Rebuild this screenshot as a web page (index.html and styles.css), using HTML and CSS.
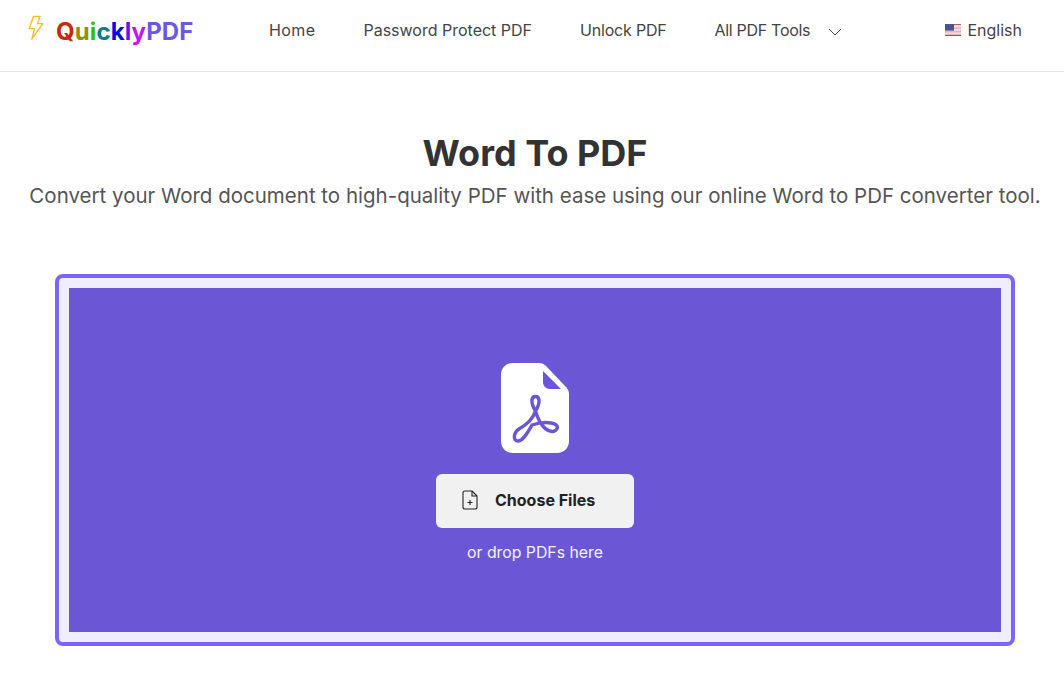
FILE: index.html
```html
<!DOCTYPE html>
<html lang="en">
<head>
    <meta charset="UTF-8">
    <meta name="viewport" content="width=device-width, initial-scale=1.0">
    <title>Word To PDF</title>
    <link rel="stylesheet" href="styles.css">
</head>
<body>
<header class="navbar">
    <a class="logo" href="#">
        <svg class="logo-bolt" width="18" height="26" viewBox="0 0 18 26" fill="none" stroke="#fbbc2c" stroke-width="1.4" stroke-linejoin="round">
            <path d="M6.5 1.5H13L10.6 8.6H15.8L4.8 24.2L7.6 13.6H2.2Z"/>
        </svg>
        <span class="logo-text"><span class="c1">Q</span><span class="c2">u</span><span class="c3">i</span><span class="c4">c</span><span class="c5">k</span><span class="c6">l</span><span class="c7">y</span><span class="c8">PDF</span></span>
    </a>
    <nav class="nav-links">
        <a href="#" class="nav-home">Home</a>
        <a href="#">Password Protect PDF</a>
        <a href="#" class="nav-unlock">Unlock PDF</a>
        <a href="#" class="nav-dropdown">All PDF Tools
            <svg width="14" height="8" viewBox="0 0 14 8" fill="none" stroke="#444" stroke-width="1"><path d="M1 1L7 7L13 1"/></svg>
        </a>
    </nav>
    <a class="lang" href="#">
        <svg width="16" height="12" viewBox="0 0 16 12">
            <rect width="16" height="12" fill="#f3d9da"/>
            <rect y="0" width="16" height="1" fill="#c9555f"/>
            <rect y="3.6" width="16" height="1" fill="#e3a5aa"/>
            <rect y="7.2" width="16" height="1" fill="#e3a5aa"/>
            <rect y="10.8" width="16" height="1.2" fill="#c0424e"/>
            <rect width="9" height="6.6" fill="#4a5590"/>
        </svg>
        English
    </a>
</header>

<main class="content">
    <h1>Word To PDF</h1>
    <p class="subtitle">Convert your Word document to high-quality PDF with ease using our online Word to PDF converter tool.</p>

    <div class="upload-box">
        <div class="upload-inner">
            <svg class="pdf-icon" width="68" height="90" viewBox="0 0 68 90">
                <path fill="#fff" d="M12 0H38C41 0 43 1 45 3L64 23C67 26 68 28 68 31V78C68 85 63 90 56 90H12C5 90 0 85 0 78V12C0 5 5 0 12 0Z"/>
                <path fill="#6b57d6" d="M42 8L60 26H49C45 26 42 23 42 19Z"/>
                <path fill="none" stroke="#6b57d6" stroke-width="3.4" stroke-linejoin="round" d="M34.5 48C29.5 40 30 33.5 34.5 33.5C39 33.5 39.5 40 34.5 48C32 56 25 62 18 66C12 70 12 78 17 78C22 78 27 69 31 62C37 60 44 59 50 60C56 61 58 64 55 67C52 70 45 68 41 62C38 58 36 53 34.5 48Z"/>
            </svg>
            <button class="choose-btn">
                <svg width="16" height="20" viewBox="0 0 16 20" fill="none" stroke="#222" stroke-width="1.1" stroke-linejoin="round">
                    <path d="M3 1H10L15 6V17C15 18 14 19 13 19H3C2 19 1 18 1 17V3C1 2 2 1 3 1Z"/>
                    <path d="M10 1V6H15"/>
                    <path d="M8 10V15M5.5 12.5H10.5"/>
                </svg>
                <span>Choose Files</span>
            </button>
            <p class="drop-text">or drop PDFs here</p>
        </div>
    </div>
</main>
</body>
</html>
```

FILE: styles.css
```css
body {
    margin: 0;
    font-family: Inter, "Open Sans", sans-serif;
    background-color: #fff;
    color: #333;
}

a {
    text-decoration: none;
    color: inherit;
}

.navbar {
    display: flex;
    align-items: center;
    box-sizing: border-box;
    height: 72px;
    padding: 0 42px 12px 27px;
    border-bottom: 1px solid #e6e6e6;
}

.logo {
    display: flex;
    align-items: center;
    gap: 11px;
    width: 242px;
}

.logo-bolt {
    margin-top: -4px;
}

.logo-text {
    margin-top: 3px;
    font-size: 24px;
    font-weight: 700;
    letter-spacing: 0.1px;
}

.c1 { color: #c62a0c; }
.c2 { color: #8d9400; }
.c3 { color: #2fc000; }
.c4 { color: #057f8a; }
.c5 { color: #0a0ae0; }
.c6 { color: #6a10f0; }
.c7 { color: #c414f0; }
.c8 { color: #6b57e6; }

.nav-links {
    display: flex;
    flex: 1;
    gap: 48px;
    font-size: 16px;
    color: #444;
}

.nav-home {
    letter-spacing: 0.4px;
}

.nav-unlock {
    letter-spacing: -0.2px;
}

.nav-dropdown {
    letter-spacing: -0.3px;
}

.nav-dropdown svg {
    margin-left: 14px;
}

.lang {
    display: flex;
    align-items: center;
    gap: 6px;
    font-size: 16px;
    color: #444;
}

.content {
    display: flex;
    flex-direction: column;
    align-items: center;
    padding-left: 6px;
    text-align: center;
}

.content h1 {
    margin: 57px 0 0;
    font-size: 36px;
    line-height: 48px;
    font-weight: 700;
    color: #333;
}

.subtitle {
    margin: 4px 0 0;
    font-size: 20.5px;
    line-height: 30px;
    color: #555;
}

.upload-box {
    box-sizing: border-box;
    width: 960px;
    height: 372px;
    margin-top: 63px;
    padding: 10px;
    background-color: #f0eefe;
    border: 4px solid #7c66f7;
    border-radius: 8px;
}

.upload-inner {
    display: flex;
    flex-direction: column;
    align-items: center;
    height: 100%;
    padding-top: 75px;
    box-sizing: border-box;
    background-color: #6b57d6;
}

.choose-btn {
    display: flex;
    align-items: center;
    gap: 17px;
    width: 198px;
    height: 54px;
    margin-top: 21px;
    padding: 0 0 2px 26px;
    border: none;
    border-radius: 6px;
    background-color: #f1f1f1;
    color: #222;
    font-family: inherit;
    font-size: 16px;
    font-weight: 700;
    cursor: pointer;
}

.drop-text {
    margin: 15px 0 0;
    font-size: 15.8px;
    line-height: 20px;
    color: #f4f2ff;
}
```
